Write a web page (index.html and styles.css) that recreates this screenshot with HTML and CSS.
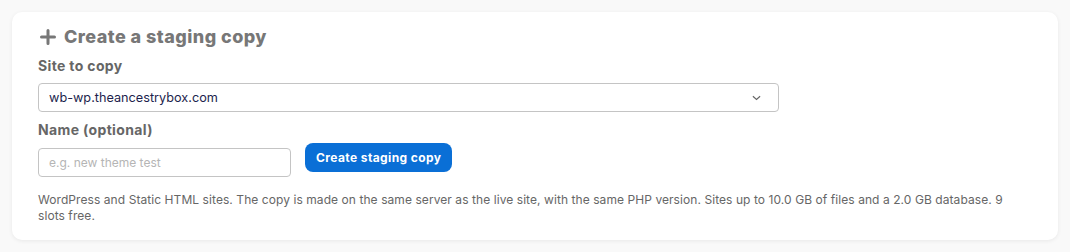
FILE: index.html
```html
<!DOCTYPE html>
<html lang="en">
<head>
    <meta charset="utf-8">
    <title>Create a staging copy</title>
    <link rel="stylesheet" href="styles.css">
</head>
<body>
    <div class="card">
        <h2 class="card-title">
            <svg class="plus-icon" viewBox="0 0 16 16" width="16" height="16"><path d="M8 1.5v13M1.5 8h13" stroke="currentColor" stroke-width="3" stroke-linecap="round"/></svg>
            Create a staging copy
        </h2>

        <label class="field-label" for="siteSelect">Site to copy</label>
        <div class="select-wrap">
            <select id="siteSelect" class="site-select">
                <option>wb-wp.theancestrybox.com</option>
            </select>
            <svg class="chevron" viewBox="0 0 10 6" width="9" height="6"><path d="M1 1l4 3.5L9 1" fill="none" stroke="currentColor" stroke-width="1.3"/></svg>
        </div>

        <label class="field-label" for="nameInput">Name (optional)</label>
        <div class="name-row">
            <input id="nameInput" class="name-input" type="text" placeholder="e.g. new theme test">
            <button class="create-btn">Create staging copy</button>
        </div>

        <p class="note">WordPress and Static HTML sites. The copy is made on the same server as the live site, with the same PHP version. Sites up to 10.0 GB of files and a 2.0 GB database. 9 slots free.</p>
    </div>
</body>
</html>
```

FILE: styles.css
```css
body {
    margin: 0;
    padding: 12px;
    background-color: #f9f9f9;
    font-family: "Inter", "Open Sans", sans-serif;
    box-sizing: border-box;
}
.card {
    background: white;
    border-radius: 10px;
    box-shadow: 0 1px 4px rgba(0,0,0,0.07);
    padding: 12px 26px 16px;
    width: 1046px;
    box-sizing: border-box;
}
.card-title {
    display: flex;
    align-items: center;
    gap: 8px;
    margin: 0 0 6px;
    font-size: 18px;
    font-weight: 800;
    letter-spacing: 0.45px;
    color: #777;
    line-height: 26px;
}
.plus-icon {
    margin-left: 2px;
}
.field-label {
    display: block;
    font-size: 14px;
    font-weight: 700;
    letter-spacing: 0.35px;
    color: #666;
    line-height: 20px;
    margin-bottom: 7px;
}
.select-wrap {
    position: relative;
    width: 741px;
    margin-bottom: 8px;
}
.site-select {
    appearance: none;
    width: 100%;
    height: 29px;
    border: 1px solid #c4c4c4;
    border-radius: 4px;
    background: white;
    padding: 0 10px;
    font-family: inherit;
    font-size: 12.7px;
    color: #1d1f4d;
}
.chevron {
    position: absolute;
    right: 18px;
    top: 12px;
    color: #666;
}
.name-row {
    display: flex;
    align-items: flex-start;
    gap: 14px;
    margin-top: -8px;
}
.name-input {
    width: 253px;
    height: 29px;
    margin-top: 9px;
    box-sizing: border-box;
    border: 1px solid #c4c4c4;
    border-radius: 4px;
    padding: 0 10px;
    font-family: inherit;
    font-size: 12px;
}
.name-input::placeholder {
    color: #b5b5b5;
}
.create-btn {
    height: 29px;
    margin-top: 4px;
    padding: 0 11px;
    border: none;
    border-radius: 8px;
    background-color: #0a6fd6;
    color: white;
    font-family: inherit;
    font-size: 12px;
    font-weight: 700;
    letter-spacing: 0.4px;
    cursor: pointer;
}
.note {
    margin: 15px 0 0;
    font-size: 12px;
    line-height: 16px;
    letter-spacing: 0.07px;
    color: #666;
}
```
